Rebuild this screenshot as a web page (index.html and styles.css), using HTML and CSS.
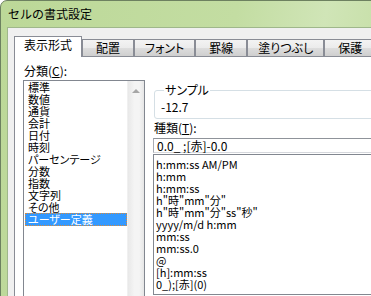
FILE: index.html
```html
<!DOCTYPE html>
<html lang="ja">
    <head>
        <meta charset="UTF-8">
        <meta name="viewport" content="width=device-width, initial-scale=1.0">
        <title>セルの書式設定</title>
        <link rel="stylesheet" href="styles.css">
    </head>
    <body>
        <div class="window">
            <div class="titlebar">セルの書式設定</div>
            <div class="client">
                <div class="tabs">
                    <div class="tab tab-active">表示形式</div>
                    <div class="tab">配置</div>
                    <div class="tab">フォント</div>
                    <div class="tab">罫線</div>
                    <div class="tab">塗りつぶし</div>
                    <div class="tab">保護</div>
                </div>
                <div class="panel">
                    <div class="category">
                        <div class="label">分類(<u>C</u>):</div>
                        <div class="listbox">
                            <ul class="items">
                                <li>標準</li>
                                <li>数値</li>
                                <li>通貨</li>
                                <li>会計</li>
                                <li>日付</li>
                                <li>時刻</li>
                                <li>パーセンテージ</li>
                                <li>分数</li>
                                <li>指数</li>
                                <li>文字列</li>
                                <li>その他</li>
                                <li class="selected">ユーザー定義</li>
                            </ul>
                            <div class="scrollbar">
                                <span class="arrow-up"></span>
                            </div>
                        </div>
                    </div>
                    <div class="format">
                        <fieldset class="sample">
                            <legend>サンプル</legend>
                            <div class="sample-value">-12.7</div>
                        </fieldset>
                        <div class="label label-type">種類(<u>T</u>):</div>
                        <div class="textbox">0.0_ ;[赤]-0.0</div>
                        <ul class="codes">
                            <li>h:mm:ss AM/PM</li>
                            <li>h:mm</li>
                            <li>h:mm:ss</li>
                            <li>h"時"mm"分"</li>
                            <li>h"時"mm"分"ss"秒"</li>
                            <li>yyyy/m/d h:mm</li>
                            <li>mm:ss</li>
                            <li>mm:ss.0</li>
                            <li>@</li>
                            <li>[h]:mm:ss</li>
                            <li>0_);[赤](0)</li>
                        </ul>
                    </div>
                </div>
            </div>
        </div>
    </body>
</html>
```

FILE: styles.css
```css
* {
    box-sizing: border-box;
    margin: 0;
    padding: 0;
}

body {
    width: 371px;
    height: 296px;
    overflow: hidden;
    background-color: #ffffff;
    font-family: "Noto Sans CJK JP", "Liberation Sans", sans-serif;
    font-size: 12px;
    color: #000000;
}

.window {
    width: 470px;
    height: 340px;
    border: 1px solid #6d8160;
    border-radius: 7px 7px 0 0;
    padding: 0 6px;
    background: linear-gradient(100deg, #bcd898 0%, #c3dda2 45%, #d0e5b7 62%, #c2dca0 80%, #bdd99a 100%);
}

.titlebar {
    height: 26px;
    line-height: 26px;
    padding-left: 1px;
    white-space: nowrap;
}

.client {
    height: 320px;
    border-top: 1px solid #9fb78b;
    border-left: 1px solid #9fb78b;
    background-color: #f0f0f0;
    padding: 8px 0 0 6px;
}

/* tabs */

.tabs {
    display: flex;
    align-items: flex-end;
    height: 20px;
}

.tab {
    position: relative;
    height: 17px;
    min-width: 52px;
    padding: 0 10px;
    line-height: 16px;
    text-align: center;
    white-space: nowrap;
    border: 1px solid #898c95;
    border-bottom: 0;
    background: linear-gradient(#f3f3f3, #ebebeb 50%, #dddddd 50%, #cfcfcf);
    font-feature-settings: "palt";
}

.tab-active {
    z-index: 1;
    height: 21px;
    margin-bottom: -1px;
    padding: 0 9px 4px;
    background: #ffffff;
}

/* panel */

.panel {
    display: flex;
    gap: 8px;
    height: 300px;
    border: 1px solid #898c95;
    background-color: #ffffff;
    padding: 5px 0 0 8px;
}

.label {
    line-height: 18px;
    margin-left: 1px;
}

.category {
    width: 122px;
}

.listbox {
    display: flex;
    height: 240px;
    border: 1px solid #828790;
}

.items {
    list-style: none;
    flex: 1;
    padding: 0 0 0 1px;
    font-size: 11px;
    font-feature-settings: "palt";
}

.items li {
    height: 12px;
    line-height: 12px;
    padding-left: 2px;
    border: 1px solid transparent;
    border-width: 0 1px;
    white-space: nowrap;
}

.items .selected {
    background-color: #3399ff;
    color: #ffffff;
    border: 1px dotted #d98a3c;
    height: 13px;
    line-height: 11px;
}

.scrollbar {
    width: 17px;
    background: linear-gradient(90deg, #e8e8e8, #f4f4f4 40%, #f4f4f4 70%, #e6e6e6);
    border-left: 1px solid #f0f0f0;
    display: flex;
    justify-content: center;
    padding-top: 8px;
}

.arrow-up {
    width: 0;
    height: 0;
    border-left: 4px solid transparent;
    border-right: 4px solid transparent;
    border-bottom: 4px solid #a6a6a6;
}

/* format */

.format {
    flex: 1;
    padding-top: 21px;
}

.sample {
    height: 36px;
    border: 1px solid #d5dfe5;
    border-radius: 3px;
    margin-left: 1px;
    padding: 3px 0 0 6px;
    font-feature-settings: "palt";
}

.sample legend {
    line-height: 14px;
    margin-left: 3px;
    padding: 0 1px;
}

.sample-value {
    line-height: 14px;
}

.label-type {
    line-height: 14px;
    margin-top: 2px;
    margin-bottom: 3px;
}

.textbox {
    height: 15px;
    line-height: 13px;
    border: 1px solid #a3a6ad;
    border-color: #8f939a #d6d8dd #d6d8dd #a9acb3;
    padding-left: 3px;
    white-space: nowrap;
}

.codes {
    list-style: none;
    height: 141px;
    margin-top: 1px;
    border: 1px solid #828790;
    padding: 3px 0 0 2px;
    font-size: 11px;
}

.codes li {
    height: 12px;
    line-height: 12px;
    white-space: nowrap;
}
```
